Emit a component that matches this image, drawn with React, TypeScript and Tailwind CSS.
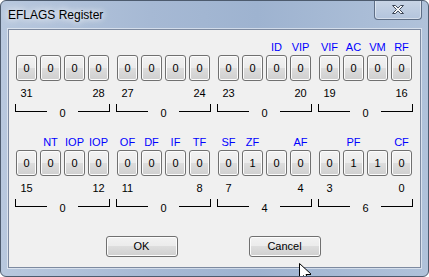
const rows = [
  {
    groups: [
      { names: ["", "", "", ""], bits: "0000", hi: 31, lo: 28, total: "0" },
      { names: ["", "", "", ""], bits: "0000", hi: 27, lo: 24, total: "0" },
      { names: ["", "", "ID", "VIP"], bits: "0000", hi: 23, lo: 20, total: "0" },
      { names: ["VIF", "AC", "VM", "RF"], bits: "0000", hi: 19, lo: 16, total: "0" },
    ],
  },
  {
    groups: [
      { names: ["", "NT", "IOP", "IOP"], bits: "0000", hi: 15, lo: 12, total: "0" },
      { names: ["OF", "DF", "IF", "TF"], bits: "0000", hi: 11, lo: 8, total: "0" },
      { names: ["SF", "ZF", "", "AF"], bits: "0100", hi: 7, lo: 4, total: "4" },
      { names: ["", "PF", "", "CF"], bits: "0110", hi: 3, lo: 0, total: "6" },
    ],
  },
];

const btn =
  "rounded-[3px] border border-[#707070] bg-[linear-gradient(#f2f2f2,#ebebeb_50%,#dddddd_50%,#cfcfcf)] shadow-[inset_0_0_0_1px_#fcfcfc] text-black flex items-center justify-center";

type Group = (typeof rows)[number]["groups"][number];

function FlagGroup({ g }: { g: Group }) {
  return (
    <div className="w-[93px] flex flex-col">
      <div className="grid grid-cols-4 gap-x-[3px] h-[13px] text-center text-[#0000ff]">
        {g.names.map((n, i) => (
          <span key={i}>{n}</span>
        ))}
      </div>
      <div className="grid grid-cols-4 gap-x-[3px] mt-px">
        {g.bits.split("").map((b, i) => (
          <div key={i} className={`${btn} h-[26px]`}>
            {b}
          </div>
        ))}
      </div>
      <div className="grid grid-cols-4 gap-x-[3px] mt-[6px] h-[13px] text-center">
        <span>{g.hi}</span>
        <span />
        <span />
        <span>{g.lo}</span>
      </div>
      <div className="flex -mx-px mt-[4px] h-[15px]">
        <div className="flex-1 h-[8px] border-l border-b border-black" />
        <span className="px-[12px] mt-[3px]">{g.total}</span>
        <div className="flex-1 h-[8px] border-r border-b border-black" />
      </div>
    </div>
  );
}

export default function App() {
  return (
    <div className="relative w-[429px] h-[277px] overflow-hidden rounded-[6px] border border-[#4d5b6e] bg-[linear-gradient(90deg,#b8c8de,#a6b9d4_35%,#9eb3d0_60%,#b0c2da)] flex flex-col">
      {/* title bar */}
      <div className="h-[28px] flex items-start pl-[7px] pt-[5px] font-['Liberation_Sans',sans-serif] text-[12px] text-black [text-shadow:0_0_6px_#fff,0_0_10px_#fff]">
        EFLAGS Register
      </div>
      <div className="absolute top-[-1px] right-[6px] w-[48px] h-[20px] rounded-b-[4px] border border-t-0 border-[#5e6e86] bg-[linear-gradient(#c9d5e6,#b3c4dc)] shadow-[inset_0_0_0_1px_rgba(255,255,255,0.45)] flex items-center justify-center">
        <svg width="14" height="11" viewBox="0 0 14 11">
          <path
            d="M1.5 1.5h3l2.5 2.6 2.5-2.6h3l-4 4 4 4h-3l-2.5-2.6-2.5 2.6h-3l4-4z"
            fill="#fff"
            stroke="#3c4657"
            strokeWidth="1"
            strokeLinejoin="round"
          />
        </svg>
      </div>

      {/* client area */}
      <div className="mx-[7px] mb-[8px] flex-1 border border-[#7d8aa0] shadow-[0_0_0_1px_rgba(255,255,255,0.5)] bg-[#f0f0f0] font-['Liberation_Sans',sans-serif] text-[11px] leading-[13px] text-black flex flex-col pl-[7px] pr-[8px] pt-[11px]">
        <div className="flex flex-col gap-[17px]">
          {rows.map((r, ri) => (
            <div key={ri} className="flex gap-[8px]">
              {r.groups.map((g, gi) => (
                <FlagGroup key={gi} g={g} />
              ))}
            </div>
          ))}
        </div>
        <div className="mt-[22px] flex justify-center gap-[71px] pr-[2px]">
          <button type="button" className={`${btn} w-[72px] h-[21px]`}>
            OK
          </button>
          <button type="button" className={`${btn} w-[72px] h-[21px]`}>
            Cancel
          </button>
        </div>
      </div>

      {/* mouse pointer */}
      <svg className="absolute left-[298px] top-[262px]" width="12" height="19" viewBox="0 0 12 19">
        <path d="M0.5 0.5v16l4-4 2.5 6 2.5-1-2.5-6h5.5z" fill="#fff" stroke="#000" strokeWidth="1" />
      </svg>
    </div>
  );
}
